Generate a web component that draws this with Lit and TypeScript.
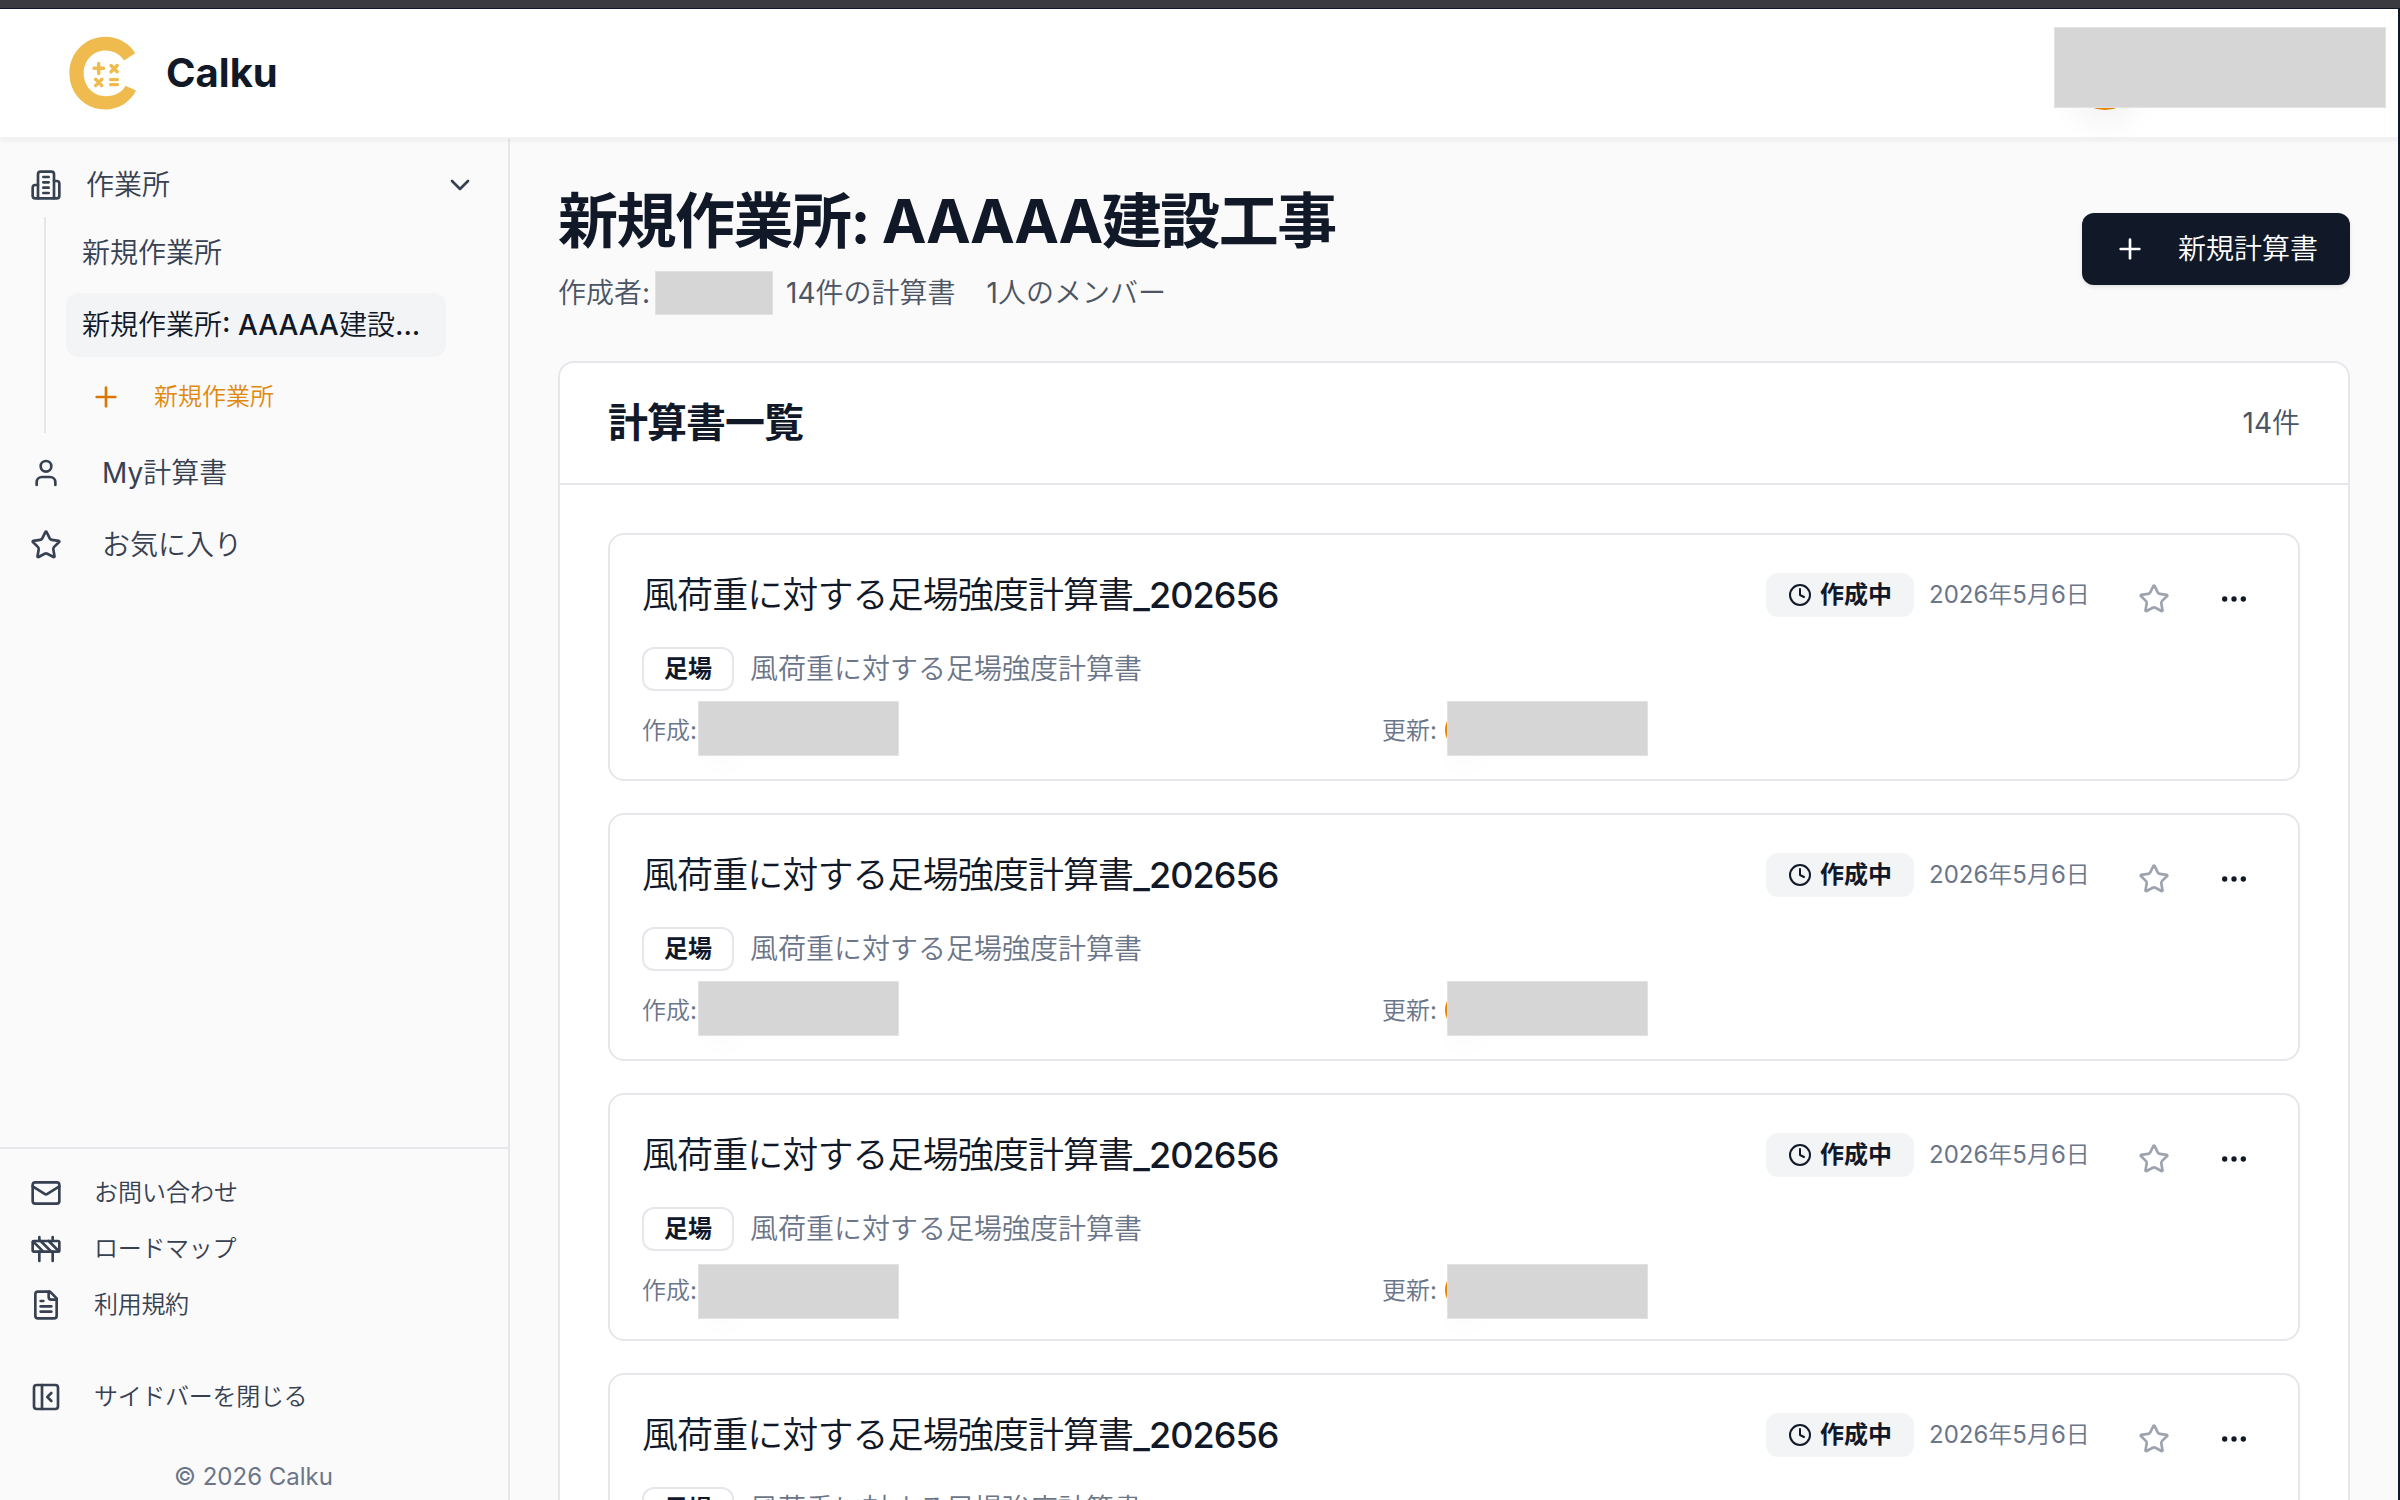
import { LitElement, html, css, svg } from "lit";
import { customElement, property } from "lit/decorators.js";

const ICONS: Record<string, unknown> = {
  building: svg`<path d="M6 22V4a2 2 0 0 1 2-2h8a2 2 0 0 1 2 2v18Z"/><path d="M6 12H4a2 2 0 0 0-2 2v6a2 2 0 0 0 2 2h2"/><path d="M18 9h2a2 2 0 0 1 2 2v9a2 2 0 0 1-2 2h-2"/><path d="M10 6h4"/><path d="M10 10h4"/><path d="M10 14h4"/><path d="M10 18h4"/>`,
  chevron: svg`<path d="m6 9 6 6 6-6"/>`,
  plus: svg`<path d="M5 12h14"/><path d="M12 5v14"/>`,
  user: svg`<path d="M19 21v-2a4 4 0 0 0-4-4H9a4 4 0 0 0-4 4v2"/><circle cx="12" cy="7" r="4"/>`,
  star: svg`<path d="M11.525 2.295a.53.53 0 0 1 .95 0l2.31 4.679a2.123 2.123 0 0 0 1.595 1.16l5.166.756a.53.53 0 0 1 .294.904l-3.736 3.638a2.123 2.123 0 0 0-.611 1.878l.882 5.14a.53.53 0 0 1-.771.56l-4.618-2.428a2.122 2.122 0 0 0-1.973 0L6.396 21.01a.53.53 0 0 1-.77-.56l.881-5.139a2.122 2.122 0 0 0-.611-1.879L2.16 9.795a.53.53 0 0 1 .294-.906l5.165-.755a2.122 2.122 0 0 0 1.597-1.16z"/>`,
  mail: svg`<rect width="20" height="16" x="2" y="4" rx="2"/><path d="m22 7-8.97 5.7a1.94 1.94 0 0 1-2.06 0L2 7"/>`,
  construction: svg`<rect x="2" y="6" width="20" height="8" rx="1"/><path d="M17 14v7"/><path d="M7 14v7"/><path d="M17 3v3"/><path d="M7 3v3"/><path d="M10 14 2.3 6.3"/><path d="m14 6 7.7 7.7"/><path d="m8 6 8 8"/>`,
  file: svg`<path d="M15 2H6a2 2 0 0 0-2 2v16a2 2 0 0 0 2 2h12a2 2 0 0 0 2-2V7Z"/><path d="M14 2v4a2 2 0 0 0 2 2h4"/><path d="M10 9H8"/><path d="M16 13H8"/><path d="M16 17H8"/>`,
  panel: svg`<rect width="18" height="18" x="3" y="3" rx="2"/><path d="M9 3v18"/><path d="m16 15-3-3 3-3"/>`,
  clock: svg`<circle cx="12" cy="12" r="10"/><path d="M12 6v6l4 2"/>`,
  dots: svg`<circle cx="12" cy="12" r="1"/><circle cx="19" cy="12" r="1"/><circle cx="5" cy="12" r="1"/>`,
};

/* Latin runs get the regular Inter weight beside the lighter Japanese text. */
const mixed = (text: string) =>
  text.split(/([\x21-\x7e]+)/).map((part) => (/^[\x21-\x7e]/.test(part) ? html`<span class="latin">${part}</span>` : part));

@customElement("line-icon")
class LineIcon extends LitElement {
  @property() name = "";
  static styles = css`
    :host { display: block; width: 32px; height: 32px; flex: none; }
    svg { display: block; width: 100%; height: 100%; fill: none; stroke: currentColor; stroke-width: 2; stroke-linecap: round; stroke-linejoin: round; }
  `;
  render() {
    return html`<svg viewBox="0 0 24 24">${ICONS[this.name]}</svg>`;
  }
}

const textBase = css`
  * { box-sizing: border-box; }
  .latin { font-weight: 400; }
  .en { font-weight: 500; }
`;

@customElement("report-card")
class ReportCard extends LitElement {
  @property() heading = "";
  @property() serial = "";
  @property() tag = "";
  @property() date = "";
  @property({ type: Boolean, reflect: true }) low = false;
  static styles = [textBase, css`
    :host { display: block; height: 248px; flex: none; border: 2px solid #e5e7eb; border-radius: 16px; background: #fff; padding: 32px; box-sizing: border-box; }
    .top { display: flex; align-items: center; height: 56px; }
    .title { flex: 1; font-size: 36px; letter-spacing: -0.92px; color: #111827; }
    .status { display: flex; align-items: center; gap: 8px; height: 44px; padding: 0 22px; border-radius: 12px; background: #f3f4f6; color: #111827; font-size: 24px; font-weight: 600; }
    .status line-icon { width: 24px; height: 24px; }
    .date { width: 161px; margin-left: 15px; font-size: 24px; color: #6b7588; }
    .star { color: #9ca3af; margin: 8px 0 0 48px; }
    .more { color: #111827; margin: 8px 16px 0 48px; }
    .kind { display: flex; align-items: center; gap: 16px; margin-top: 24px; height: 44px; }
    .tag { height: 44px; display: flex; align-items: center; padding: 0 20px; border: 2px solid #e5e7eb; border-radius: 12px; font-size: 24px; font-weight: 600; color: #111827; }
    .desc { padding-top: 2px; font-size: 28px; color: #6b7588; }
    .people { display: grid; grid-template-columns: 740px 1fr; height: 54px; margin-top: 10px; font-size: 24px; color: #6b7588; }
    .person { display: flex; align-items: center; height: 58px; }
    .person > span { padding-top: 2px; }
    .who { position: relative; width: 201px; height: 55px; margin: -3px 0 0 1px; }
    .person:last-child .who { margin-left: 10px; }
    .avatar { position: absolute; left: -2px; top: 9px; width: 40px; height: 40px; border-radius: 50%; background: #e58200; box-shadow: 0 20px 30px -6px rgba(0,0,0,.03); }
    .person:first-child .avatar { left: 5px; }
    .mask { position: absolute; inset: 0; background: #d6d6d6; border: 1px solid #e2e2e2; }
    :host([low]) .mask { top: 3px; bottom: -3px; }
  `];
  render() {
    return html`
      <div class="top">
        <div class="title">${this.heading}<span class="en">_${this.serial}</span></div>
        <div class="status"><line-icon name="clock"></line-icon><span>作成中</span></div>
        <div class="date">${mixed(this.date)}</div>
        <line-icon class="star" name="star"></line-icon>
        <line-icon class="more" name="dots"></line-icon>
      </div>
      <div class="kind"><div class="tag">${this.tag}</div><div class="desc">${this.heading}</div></div>
      <div class="people">
        <div class="person"><span>${mixed("作成:")}</span><div class="who"><div class="avatar"></div><div class="mask"></div></div></div>
        <div class="person"><span>${mixed("更新:")}</span><div class="who"><div class="avatar"></div><div class="mask"></div></div></div>
      </div>`;
  }
}

@customElement("app-root")
class AppRoot extends LitElement {
  static styles = [textBase, css`
    :host { display: flex; flex-direction: column; width: 2400px; height: 1500px; overflow: hidden; box-sizing: border-box; background: #fafafa; font-family: Inter, "Noto Sans CJK JP", sans-serif; font-weight: 350; line-height: 1.4; color: #374151; white-space: nowrap; }
    .chrome { height: 9px; flex: none; background: #3a3b40; border-bottom: 1px solid #111827; }
    .window { flex: 1; min-height: 0; display: flex; flex-direction: column; border-right: 2px solid #111827; }
    header { position: relative; z-index: 2; flex: none; height: 130px; background: #fff; border-bottom: 2px solid #f1f2f4; box-shadow: 0 2px 4px rgba(0,0,0,.05); display: flex; align-items: center; justify-content: space-between; padding: 0 12px 0 60px; }
    .brand { display: flex; align-items: center; gap: 16px; }
    .logo { display: block; width: 90px; height: 90px; margin-top: -5px; }
    .brand span { font-size: 40px; font-weight: 700; color: #111827; }
    .account { position: relative; width: 332px; height: 81px; margin-top: -11px; }
    .face { position: absolute; left: 15px; top: 11px; width: 72px; height: 72px; border-radius: 50%; background: #e58200; box-shadow: 0 16px 30px -2px rgba(0,0,0,.05); }
    .mask { position: absolute; inset: 0; background: #d6d6d6; border: 1px solid #e2e2e2; }
    .body { flex: 1; min-height: 0; display: flex; }
    aside { width: 510px; flex: none; border-right: 2px solid #e5e7eb; display: flex; flex-direction: column; }
    nav { flex: 1; padding-top: 14px; font-size: 28px; }
    .row { display: flex; align-items: center; height: 64px; padding-left: 30px; }
    .row.group { padding-right: 32px; }
    nav .row > span { padding-top: 2px; }
    .group > span { flex: 1; margin-left: 24px; }
    .row.link { margin-top: 8px; }
    .link > span { margin-left: 40px; }
    .sub { margin-left: 44px; border-left: 2px solid #e5e7eb; padding: 4px 0 4px 20px; display: flex; flex-direction: column; gap: 8px; }
    .item { height: 64px; width: 380px; padding: 2px 16px 0; display: flex; align-items: center; border-radius: 12px; }
    .item.active { background: #f3f4f6; color: #111827; }
    .item.add { padding: 0 0 0 24px; gap: 32px; font-size: 24px; color: #e0890f; }
    .item.add line-icon { color: #d97706; }
    .foot { border-top: 2px solid #e5e7eb; height: 353px; padding-top: 16px; font-size: 24px; }
    .foot .row { height: 56px; }
    .foot .row span { margin-left: 32px; letter-spacing: -.3px; margin-top: -1px; }
    .foot .row:first-child span { letter-spacing: 0; }
    .foot .close { margin-top: 36px; }
    .copy { height: 56px; margin-top: 24px; line-height: 56px; text-align: center; color: #6b7588; font-weight: 400; padding-right: 1px; }
    main { flex: 1; padding: 46px 48px 0; display: flex; flex-direction: column; min-width: 0; }
    .head { display: flex; justify-content: space-between; height: 176px; flex: none; }
    h1 { margin: 0; height: 72px; line-height: 72px; font-size: 60px; letter-spacing: -1.5px; font-weight: 700; color: #111827; }
    .meta { display: flex; align-items: center; height: 44px; margin-top: 14px; font-size: 28px; color: #4b5563; }
    .meta > span { padding-top: 2px; }
    .meta .name { width: 118px; height: 44px; background: #d6d6d6; border: 1px solid #e2e2e2; margin: 0 13px 0 5px; }
    .meta .count { margin-right: 31px; }
    .create { margin-top: 28px; width: 268px; height: 72px; border-radius: 12px; background: #111827; color: #fff; display: flex; align-items: center; padding-left: 32px; gap: 32px; font-size: 28px; box-shadow: 0 2px 4px rgba(0,0,0,.1); }
    .create span { padding-top: 2px; }
    .panel { border: 2px solid #e5e7eb; border-radius: 16px; background: #fff; height: 1400px; flex: none; }
    .panel-head { height: 122px; display: flex; align-items: center; justify-content: space-between; padding: 0 48px; border-bottom: 2px solid #e5e7eb; font-size: 28px; color: #4b5563; }
    .panel-head > span { padding-top: 2px; }
    h2 { margin: 0; font-size: 40px; letter-spacing: -1px; font-weight: 600; color: #111827; }
    .list { padding: 48px; display: flex; flex-direction: column; gap: 32px; }
  `];
  render() {
    return html`
      <div class="chrome"></div>
      <div class="window">
      <header>
        <div class="brand">
          <svg class="logo" viewBox="0 0 90 90">
            <path d="M75.200 27.300C69 17 58 10.800 45.500 10.800C25 10.800 9.400 27 9.400 47.200C9.400 67.500 25 83.500 45.500 83.500C58.500 83.500 71 75.500 76 64.500L65.500 59.700C62 66.500 54.500 70.200 46 70.200C33 70.200 23.700 60 23.700 47.500C23.700 34.500 33 24.500 45.500 24.500C53 24.500 60 28 64 34.500Z" fill="#f0bb4e"/>
            <g stroke="#f0bb4e" stroke-width="3.400" stroke-linecap="round"><path d="M34 42.300h9.500M38.700 37.500v10M51 39.500l6.200 6.300M57.200 39.500l-6.200 6.300M35.600 53.300l6.300 6.300M41.900 53.300l-6.300 6.300M50.500 53.600h7M50.500 58.600h7"/></g>
          </svg>
          <span>Calku</span>
        </div>
        <div class="account"><div class="face"></div><div class="mask"></div></div>
      </header>
      <div class="body">
        <aside>
          <nav>
            <div class="row group"><line-icon name="building"></line-icon><span>作業所</span><line-icon name="chevron"></line-icon></div>
            <div class="sub">
              <div class="item">新規作業所</div>
              <div class="item active">新規作業所<span class="en">:&nbsp;AAAAA</span>建設<span class="en">...</span></div>
              <div class="item add"><line-icon name="plus"></line-icon>新規作業所</div>
            </div>
            <div class="row link"><line-icon name="user"></line-icon><span>${mixed("My計算書")}</span></div>
            <div class="row link"><line-icon name="star"></line-icon><span>お気に入り</span></div>
          </nav>
          <div class="foot">
            <div class="row"><line-icon name="mail"></line-icon><span>お問い合わせ</span></div>
            <div class="row"><line-icon name="construction"></line-icon><span>ロードマップ</span></div>
            <div class="row"><line-icon name="file"></line-icon><span>利用規約</span></div>
            <div class="row close"><line-icon name="panel"></line-icon><span>サイドバーを閉じる</span></div>
            <div class="copy">© 2026 Calku</div>
          </div>
        </aside>
        <main>
          <div class="head">
            <div>
              <h1>新規作業所: AAAAA建設工事</h1>
              <div class="meta"><span>${mixed("作成者:")}</span><div class="name"></div><span class="count">${mixed("14件の計算書")}</span><span>${mixed("1人のメンバー")}</span></div>
            </div>
            <div class="create"><line-icon name="plus"></line-icon><span>新規計算書</span></div>
          </div>
          <div class="panel">
            <div class="panel-head"><h2>計算書一覧</h2><span>${mixed("14件")}</span></div>
            <div class="list">
              ${[0, 1, 2, 3].map((i) => html`<report-card heading="風荷重に対する足場強度計算書" serial="202656" tag="足場" date="2026年5月6日" ?low=${i === 2}></report-card>`)}
            </div>
          </div>
        </main>
      </div>
      </div>`;
  }
}
